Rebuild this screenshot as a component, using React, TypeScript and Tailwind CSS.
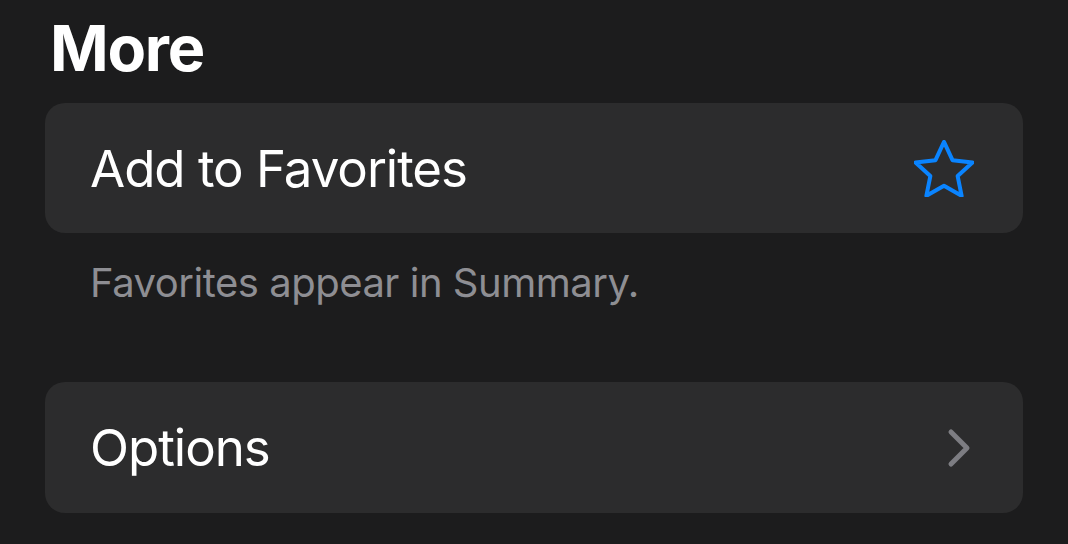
import React from 'react';

function Star() {
  return (
    <svg width="60" height="57" viewBox="2.3 2 19.4 18.4" fill="none" stroke="#0a84ff" strokeWidth="1.3" strokeLinejoin="round">
      <path d="M12 2.6l2.75 5.9 6.45.75-4.78 4.4 1.28 6.38L12 16.8l-5.7 3.23 1.28-6.38-4.78-4.4 6.45-.75z" />
    </svg>
  );
}

function Chevron() {
  return (
    <svg width="26" height="40" viewBox="0 0 26 40" fill="none" stroke="#7d7d82" strokeWidth="5" strokeLinecap="round" strokeLinejoin="round">
      <path d="M4 4l16 16L4 36" />
    </svg>
  );
}

export default function App() {
  return (
    <div className="w-[1068px] h-[544px] overflow-hidden bg-[#1c1c1d] px-[45px] font-['Inter','Noto_Sans',sans-serif] text-white">
      <div className="h-[103px] pt-[13px] pl-[5px]">
        <h1 className="text-[63px] font-bold leading-[70px] tracking-[-0.02em]">More</h1>
      </div>

      <div className="h-[130px] rounded-[20px] bg-[#2c2c2d] flex items-center justify-between pl-[45px] pr-[49px]">
        <span className="text-[51px] leading-none tracking-[-0.02em]">Add to Favorites</span>
        <Star />
      </div>

      <p className="pl-[45px] pt-[25px] text-[40px] leading-[50px] text-[#8e8e93] tracking-[-0.012em]">
        Favorites appear in Summary.
      </p>

      <div className="mt-[74px] h-[131px] rounded-[20px] bg-[#2c2c2d] flex items-center justify-between pl-[45px] pr-[50px]">
        <span className="text-[51px] leading-none tracking-[-0.02em]">Options</span>
        <Chevron />
      </div>
    </div>
  );
}
